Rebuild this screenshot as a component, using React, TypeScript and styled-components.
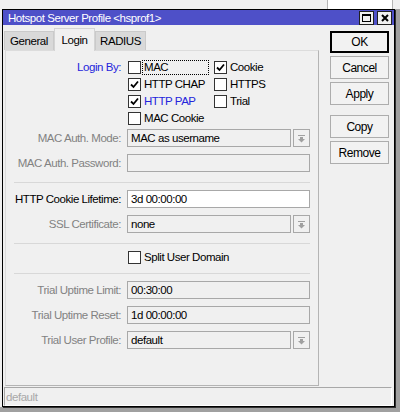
import React from 'react';
import styled, { createGlobalStyle } from 'styled-components';

const GlobalStyle = createGlobalStyle`
    body {
        margin: 0;
        background: #a0a0a0;
        font-family: "Liberation Sans", Arial, sans-serif;
        font-size: 11.5px;
        letter-spacing: -0.45px;
    }
`;

const Desktop = styled.div`
    width: 400px;
    height: 412px;
    display: flex;
    flex-direction: column;
    overflow: hidden;
    background: #a0a0a0;
`;

const TopStrip = styled.div`
    height: 9px;
    background: #f0f0f0;
    display: flex;
    justify-content: flex-end;
    padding-right: 7px;
`;

const BehindWindow = styled.div`
    width: 64px;
    height: 9px;
    background: #ffffff;
    border-left: 1px solid #b4b4b4;
    border-right: 1px solid #b4b4b4;
`;

const WindowRow = styled.div`
    display: flex;
`;

const LeftStrip = styled.div`
    width: 2px;
    background: #f0f0f0;
`;

const Window = styled.div`
    width: 391px;
    height: 396px;
    border: 1px solid #000;
    box-shadow: 1px 1px 0 #303030;
    background: #f0f0f0;
    display: flex;
    flex-direction: column;
`;

const TitleBar = styled.div`
    height: 17px;
    background: #4e50c8;
    display: flex;
    align-items: center;
    justify-content: space-between;
    padding: 0 2px 0 5px;
`;

const TitleText = styled.span`
    color: #fff;
    font-size: 11.5px;
`;

const TitleButtons = styled.div`
    display: flex;
    gap: 3px;
`;

const TitleButton = styled.div`
    width: 13px;
    height: 12px;
    background: #f0f0f0;
    border: 1px solid #202020;
    display: flex;
    align-items: center;
    justify-content: center;
`;

const Body = styled.div`
    display: flex;
    padding: 2px 0 0 1px;
    flex: 1;
`;

const LeftColumn = styled.div`
    width: 315px;
    display: flex;
    flex-direction: column;
`;

const TabRow = styled.div`
    height: 23px;
    display: flex;
    align-items: flex-end;
`;

const Tab = styled.div<{ $active?: boolean; $width: number }>`
    width: ${p => p.$width}px;
    box-sizing: border-box;
    height: ${p => (p.$active ? 23 : 19)}px;
    margin-bottom: ${p => (p.$active ? -1 : 0)}px;
    background: ${p => (p.$active ? '#f0f0f0' : '#d9d9d9')};
    border: 1px solid ${p => (p.$active ? '#d4d4d4' : '#cacaca')};
    border-bottom: none;
    display: flex;
    align-items: center;
    justify-content: center;
    color: #000;
    position: relative;
    z-index: ${p => (p.$active ? 1 : 0)};
`;

const Panel = styled.div`
    margin-left: 1px;
    height: 326px;
    border: 1px solid #b4b4b4;
    border-left-color: #dcdcdc;
    border-top-color: #dcdcdc;
    padding: 8px 8px 0 0;
    display: flex;
    flex-direction: column;
    gap: 7px;
`;

const FormRow = styled.div`
    display: grid;
    grid-template-columns: 115px 183px;
    column-gap: 6px;
    align-items: center;
`;

const Label = styled.div<{ $tone?: 'blue' | 'gray' | 'black' }>`
    text-align: right;
    white-space: nowrap;
    color: ${p => (p.$tone === 'blue' ? '#2424dc' : p.$tone === 'gray' ? '#828282' : '#000')};
`;

const LoginByRow = styled(FormRow)`
    align-items: start;
    margin-bottom: -5px;
    ${Label} {
        line-height: 17px;
    }
`;

const CheckGrid = styled.div`
    display: grid;
    grid-template-columns: 86px 86px;
    grid-auto-rows: 17px;
`;

const CheckItem = styled.div<{ $blue?: boolean }>`
    display: flex;
    align-items: center;
    gap: 2px;
    padding-left: 1px;
    color: ${p => (p.$blue ? '#2424dc' : '#000')};
    white-space: nowrap;
`;

const Box = styled.div`
    width: 11px;
    height: 11px;
    border: 1px solid #333;
    background: #fff;
    display: flex;
    align-items: center;
    justify-content: center;
    flex: none;
`;

const FocusText = styled.span<{ $focus?: boolean }>`
    padding: 0 2px 0 1px;
    height: 13px;
    line-height: 13px;
    width: ${p => (p.$focus ? '62px' : 'auto')};
    outline: ${p => (p.$focus ? '1px dotted #000' : 'none')};
`;

const Field = styled.div<{ $white?: boolean }>`
    height: 16px;
    border: 1px solid #a8a8a8;
    background: ${p => (p.$white ? '#fff' : '#f0f0f0')};
    display: flex;
    align-items: center;
    padding-left: 3px;
    color: #000;
`;

const SelectWrap = styled.div`
    display: flex;
    gap: 2px;
    ${Field} {
        flex: 1;
    }
`;

const DropButton = styled.div`
    width: 15px;
    height: 16px;
    border: 1px solid #a8a8a8;
    background: #f0f0f0;
    display: flex;
    align-items: center;
    justify-content: center;
`;

const Separator = styled.div`
    height: 1px;
    margin: 3px 0 0 8px;
    background: #d8d8d8;
`;

const CheckOnlyRow = styled(FormRow)`
    height: 12px;
`;

const StatusBar = styled.div`
    margin: 1px 2px 0 1px;
    height: 19px;
    border: 1px solid #a8a8a8;
    border-right-color: #fff;
    border-bottom-color: #fff;
    display: flex;
    align-items: center;
    padding-left: 1px;
    color: #a8a8a8;
`;

const ButtonColumn = styled.div`
    margin-left: 11px;
    padding-top: 4px;
    display: flex;
    flex-direction: column;
    gap: 3px;
`;

const DialogButton = styled.div<{ $default?: boolean; $spaced?: boolean }>`
    width: 57px;
    height: ${p => (p.$default ? 20 : 21)}px;
    border: 1px solid ${p => (p.$default ? '#000' : '#adadad')};
    outline: ${p => (p.$default ? '1px solid #000' : 'none')};
    outline-offset: -2px;
    margin-top: ${p => (p.$spaced ? 7 : 0)}px;
    background: #f2f2f2;
    display: flex;
    align-items: center;
    justify-content: center;
    font-size: 12px;
    color: #000;
`;

const Check = () => (
    <svg width="9" height="9" viewBox="0 0 9 9">
        <path d="M1 4.5 L3.5 7 L8 1.5" stroke="#000" strokeWidth="1.8" fill="none" />
    </svg>
);

const DropArrow = () => (
    <svg width="9" height="9" viewBox="0 0 9 9">
        <rect x="1" y="1" width="7" height="1" fill="#a0a0a0" />
        <rect x="3" y="3" width="3" height="2" fill="#a0a0a0" />
        <path d="M1 5 L8 5 L4.5 8.5 Z" fill="#a0a0a0" />
    </svg>
);

type CheckProps = {
    label: string;
    checked?: boolean;
    blue?: boolean;
    focus?: boolean;
};

const CheckBox = ({ label, checked, blue, focus }: CheckProps) => (
    <CheckItem $blue={blue}>
        <Box>{checked ? <Check /> : null}</Box>
        <FocusText $focus={focus}>{label}</FocusText>
    </CheckItem>
);

const App = () => {
    return (
        <Desktop>
            <GlobalStyle />
            <TopStrip>
                <BehindWindow />
            </TopStrip>
            <WindowRow>
                <LeftStrip />
                <Window>
                    <TitleBar>
                        <TitleText>Hotspot Server Profile &lt;hsprof1&gt;</TitleText>
                        <TitleButtons>
                            <TitleButton>
                                <svg width="9" height="8" viewBox="0 0 9 8">
                                    <rect x="0.5" y="0.5" width="8" height="7" stroke="#000" fill="none" />
                                    <rect x="0" y="0" width="9" height="2" fill="#000" />
                                </svg>
                            </TitleButton>
                            <TitleButton>
                                <svg width="8" height="8" viewBox="0 0 8 8">
                                    <path d="M1 1 L7 7 M7 1 L1 7" stroke="#000" strokeWidth="2" />
                                </svg>
                            </TitleButton>
                        </TitleButtons>
                    </TitleBar>
                    <Body>
                        <LeftColumn>
                            <TabRow>
                                <Tab $width={50}>General</Tab>
                                <Tab $width={41} $active>Login</Tab>
                                <Tab $width={51}>RADIUS</Tab>
                            </TabRow>
                            <Panel>
                                <LoginByRow>
                                    <Label $tone="blue">Login By:</Label>
                                    <CheckGrid>
                                        <CheckBox label="MAC" focus />
                                        <CheckBox label="Cookie" checked />
                                        <CheckBox label="HTTP CHAP" checked />
                                        <CheckBox label="HTTPS" />
                                        <CheckBox label="HTTP PAP" checked blue />
                                        <CheckBox label="Trial" />
                                        <CheckBox label="MAC Cookie" />
                                    </CheckGrid>
                                </LoginByRow>
                                <FormRow>
                                    <Label $tone="gray">MAC Auth. Mode:</Label>
                                    <SelectWrap>
                                        <Field>MAC as username</Field>
                                        <DropButton><DropArrow /></DropButton>
                                    </SelectWrap>
                                </FormRow>
                                <FormRow>
                                    <Label $tone="gray">MAC Auth. Password:</Label>
                                    <Field />
                                </FormRow>
                                <Separator />
                                <FormRow>
                                    <Label>HTTP Cookie Lifetime:</Label>
                                    <Field $white>3d 00:00:00</Field>
                                </FormRow>
                                <FormRow>
                                    <Label $tone="gray">SSL Certificate:</Label>
                                    <SelectWrap>
                                        <Field>none</Field>
                                        <DropButton><DropArrow /></DropButton>
                                    </SelectWrap>
                                </FormRow>
                                <Separator />
                                <CheckOnlyRow>
                                    <span />
                                    <CheckBox label="Split User Domain" />
                                </CheckOnlyRow>
                                <Separator />
                                <FormRow>
                                    <Label $tone="gray">Trial Uptime Limit:</Label>
                                    <Field>00:30:00</Field>
                                </FormRow>
                                <FormRow>
                                    <Label $tone="gray">Trial Uptime Reset:</Label>
                                    <Field>1d 00:00:00</Field>
                                </FormRow>
                                <FormRow>
                                    <Label $tone="gray">Trial User Profile:</Label>
                                    <SelectWrap>
                                        <Field>default</Field>
                                        <DropButton><DropArrow /></DropButton>
                                    </SelectWrap>
                                </FormRow>
                            </Panel>
                        </LeftColumn>
                        <ButtonColumn>
                            <DialogButton $default>OK</DialogButton>
                            <DialogButton>Cancel</DialogButton>
                            <DialogButton>Apply</DialogButton>
                            <DialogButton $spaced>Copy</DialogButton>
                            <DialogButton>Remove</DialogButton>
                        </ButtonColumn>
                    </Body>
                    <StatusBar>default</StatusBar>
                </Window>
            </WindowRow>
        </Desktop>
    );
};

export default App;
